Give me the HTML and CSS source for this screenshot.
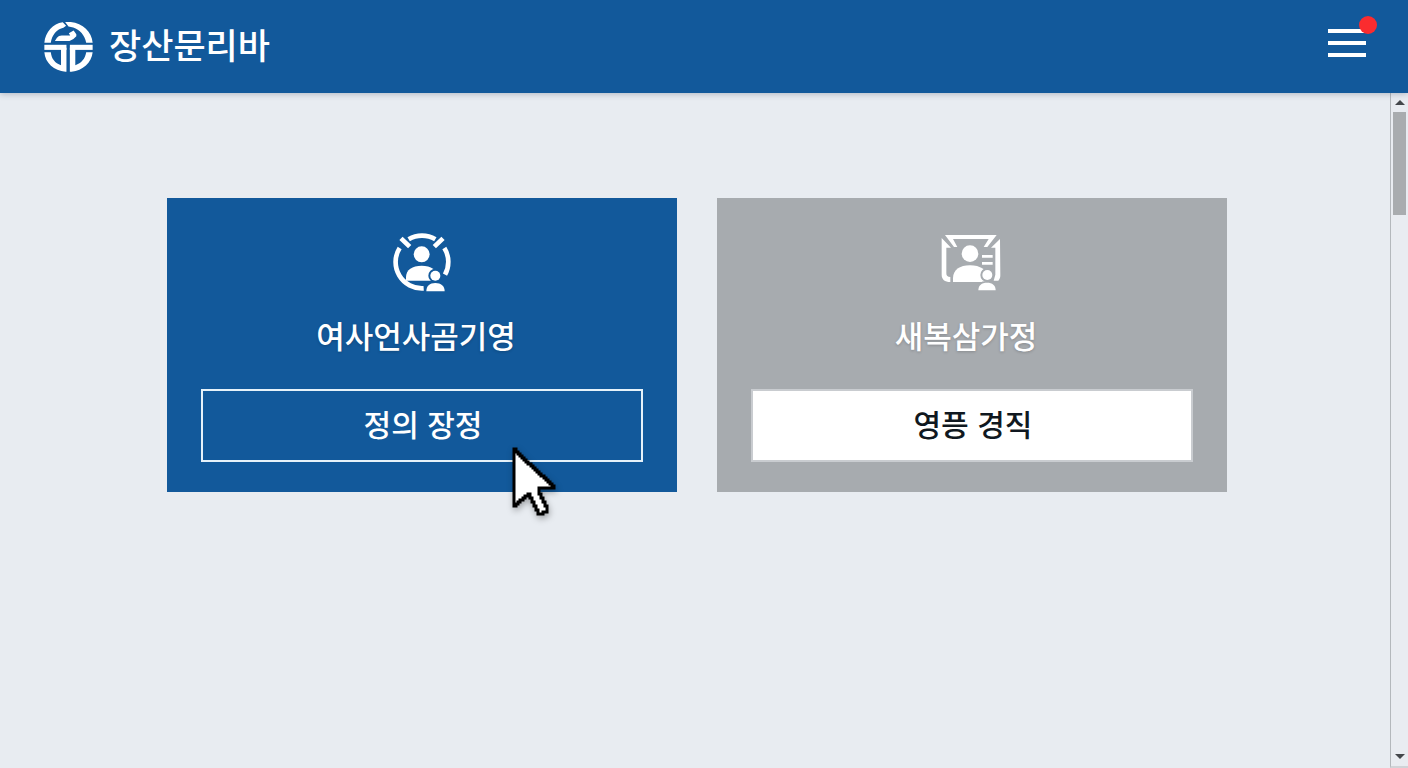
FILE: index.html
```html
<!DOCTYPE html>
<html lang="ko">
<head>
    <meta charset="utf-8">
    <meta name="viewport" content="width=device-width, initial-scale=1">
    <title>장산문리바</title>
    <link rel="stylesheet" href="styles.css">
</head>
<body>
    <!-- Top bar -->
    <header class="header">
        <a class="brand" href="#">
            <svg class="logo" viewBox="44 36 144 147" aria-hidden="true">
                <path d="M45 97C48 66 70 41 99 37L109 47L101 53C82 57 67 74 64 97Z"/>
                <path d="M106 36C150 32 184 60 187 97H168C164 75 149 58 130 52L116 49Z"/>
                <path d="M76 92L82 82Q87 76 96 76H121L117 69L131 61L139 72V78Q131 88 119 92Z"/>
                <path d="M45 103H110V118H45Z"/>
                <path d="M120 103H187V118H120Z"/>
                <path d="M94 112H110V182H107C74 180 47 156 45 125H64C66 144 76 157 94 163Z"/>
                <path d="M136 112H120V182H125C158 179 184 156 187 125H168C165 144 154 157 136 163Z"/>
            </svg>
            <span class="brand-name">장산문리바</span>
        </a>
        <button class="menu" type="button" aria-label="메뉴">
            <span class="menu-line"></span>
            <span class="menu-line"></span>
            <span class="menu-line"></span>
            <span class="badge"></span>
        </button>
    </header>

    <div class="page">
        <!-- Cards -->
        <main class="content">
            <section class="card card-blue">
                <svg class="card-icon" viewBox="38 38 174 174" aria-hidden="true">
                    <g class="ring">
                        <path d="M85 57A79 79 0 0 1 165 57"/>
                        <path d="M58 83A79 79 0 0 0 130 204"/>
                        <path d="M192 83A79 79 0 0 1 194 163"/>
                        <path d="M62 54L88 79M188 54L162 79"/>
                    </g>
                    <circle cx="124" cy="102" r="24"/>
                    <path d="M77 181V171C77 148 96 136 124 136S171 148 171 171V181Z"/>
                    <circle class="halo" cx="165" cy="166" r="16"/>
                    <path class="halo" d="M138 213C138 197 148 188 165 188S193 197 193 213Z"/>
                    <circle cx="165" cy="166" r="15"/>
                    <path d="M138 213C138 197 148 188 165 188S193 197 193 213Z"/>
                </svg>
                <h2 class="card-title">여사언사곰기영</h2>
                <div class="action">
                    <button class="card-button" type="button">정의 장정</button>
                    <svg class="cursor" viewBox="0 0 46 72" aria-hidden="true">
                        <path d="M2 3V60H4V58H6V56H8V54H11V52H13V50H16V48H18V52H20V56H22V60H24V64H26V68H31V66H35V60H33V56H31V52H29V48H27V42H42V40H40V38H38V36H36V34H34V32H32V30H29V28H27V26H25V24H23V22H21V20H19V18H16V16H14V14H12V12H10V10H8V8H6V6H4V3Z"/>
                    </svg>
                </div>
            </section>

            <section class="card card-gray">
                <svg class="card-icon" viewBox="38 38 174 174" aria-hidden="true">
                    <path d="M44 44H199L171 80H160L175 56H68L81 80H71Z"/>
                    <path d="M34 53L62 82H48V159C48 167 52 170 60 170V185C43 185 34 177 34 163Z"/>
                    <path d="M209 56L182 82H195V163L190 181H204C208 177 210 172 210 165Z"/>
                    <circle cx="119" cy="100" r="25"/>
                    <path d="M68 185V174C68 149 88 135 119 135S171 149 171 174V185Z"/>
                    <path d="M155 104H187V112H155ZM155 125H187V133H155Z"/>
                    <circle class="halo" cx="171" cy="164" r="16"/>
                    <path class="halo" d="M144 210C144 195 154 187 170 187S196 195 196 210Z"/>
                    <circle cx="171" cy="164" r="15"/>
                    <path d="M144 210C144 195 154 187 170 187S196 195 196 210Z"/>
                </svg>
                <h2 class="card-title">새복삼가정</h2>
                <div class="action">
                    <button class="card-button" type="button">영픙 경직</button>
                </div>
            </section>
        </main>

        <!-- Scroll track -->
        <div class="scroll" aria-hidden="true">
            <span class="arrow arrow-up"></span>
            <span class="thumb"></span>
            <span class="arrow arrow-down"></span>
        </div>
    </div>
</body>
</html>
```
FILE: styles.css
```css
* {
    box-sizing: border-box;
}

body {
    margin: 0;
    min-height: 100vh;
    display: flex;
    flex-direction: column;
    font-family: "Noto Sans CJK KR", "Noto Sans", sans-serif;
    background-color: #e8ecf1;
    color: #fff;
}

/* Top bar */
.header {
    height: 93px;
    padding: 0 42px 0 44px;
    display: flex;
    align-items: center;
    justify-content: space-between;
    background-color: #12599b;
    box-shadow: 0 1px 6px rgba(40, 60, 90, 0.3);
    z-index: 1;
}

.brand {
    display: flex;
    align-items: center;
    gap: 16px;
    color: #fff;
    text-decoration: none;
}

.logo {
    width: 49px;
    height: 50px;
    fill: #fff;
}

.brand-name {
    font-size: 35px;
    font-weight: 500;
    line-height: 52px;
    padding-bottom: 6px;
}

.menu {
    position: relative;
    display: flex;
    flex-direction: column;
    gap: 8px;
    margin-bottom: 8px;
    padding: 0;
    border: 0;
    background: none;
    cursor: pointer;
}

.menu-line {
    width: 38px;
    height: 4px;
    background-color: #fff;
}

.badge {
    position: absolute;
    top: -13px;
    right: -11px;
    width: 18px;
    height: 18px;
    border-radius: 50%;
    background-color: #fa2c2f;
}

/* Cards */
.page {
    flex: 1;
    display: flex;
}

.content {
    flex: 1;
    display: flex;
    justify-content: center;
    align-items: flex-start;
    gap: 40px;
    padding: 105px 32px 32px 36px;
}

.card {
    flex: 1;
    max-width: 510px;
    padding: 35px 34px 30px;
    display: flex;
    flex-direction: column;
    align-items: center;
}

.card-blue {
    background-color: #12599b;
}

.card-gray {
    background-color: #a7abaf;
}

.card-icon {
    width: 58px;
    height: 58px;
    fill: #fff;
    overflow: visible;
}

.ring {
    fill: none;
    stroke: #fff;
    stroke-width: 14;
}

.halo {
    stroke-width: 10;
}

.card-blue .halo {
    fill: #12599b;
    stroke: #12599b;
}

.card-gray .halo {
    fill: #a7abaf;
    stroke: #a7abaf;
}

.card-title {
    margin: 18px 0 28px;
    padding-right: 12px;
    font-size: 31px;
    font-weight: 500;
    line-height: 52px;
    text-shadow: 0 1px 3px rgba(0, 0, 0, 0.2);
}

.action {
    position: relative;
    width: 100%;
}

.card-button {
    display: block;
    width: 100%;
    height: 73px;
    padding: 0 0 6px 2px;
    border: 2px solid #e6f2fa;
    background: none;
    color: #fff;
    font-family: inherit;
    font-size: 30px;
    font-weight: 500;
    cursor: pointer;
}

.card-gray .card-button {
    border-color: #c9ccd0;
    background-color: #fff;
    color: #101820;
}

/* Pointer over the first button */
.cursor {
    position: absolute;
    top: 57px;
    left: 311px;
    width: 46px;
    height: 72px;
    fill: #fff;
    stroke: #000;
    stroke-width: 3;
    filter: drop-shadow(1px 3px 3px rgba(0, 0, 0, 0.3));
    pointer-events: none;
}

/* Scroll track */
.scroll {
    width: 18px;
    padding: 7px 2px;
    display: flex;
    flex-direction: column;
    align-items: center;
    border-left: 1px solid #b4b8bc;
    border-bottom: 2px solid #d0d3d7;
    background-color: #e9ecf1;
}

.arrow {
    border: 5px solid transparent;
}

.arrow-up {
    border-top-width: 0;
    border-bottom: 5px solid #44474b;
}

.arrow-down {
    margin-top: auto;
    border-bottom-width: 0;
    border-top: 5px solid #44474b;
}

.thumb {
    width: 13px;
    height: 103px;
    margin-top: 7px;
    background-color: #a9acaf;
}
```
